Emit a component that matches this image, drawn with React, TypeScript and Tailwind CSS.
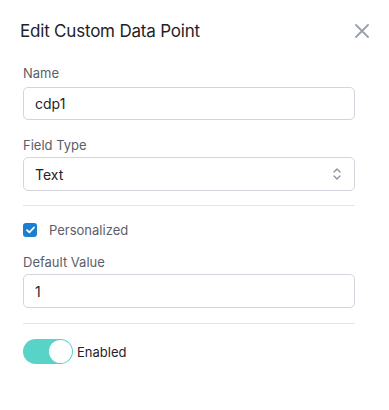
import React from "react";

export default function App() {
  return (
    <div className="w-[389px] h-[410px] bg-white" style={{ fontFamily: "Inter, 'Noto Sans', sans-serif" }}>
      <div className="flex items-start justify-between pl-[20px] pr-[20px] pt-[20px]">
        <h1 className="text-[17px] leading-[22px] text-[#1f2328] tracking-[-0.2px]">Edit Custom Data Point</h1>
        <button className="mt-[4px] text-[#9aa0ab]">
          <svg width="14" height="14" viewBox="0 0 14 14" fill="none" stroke="currentColor" strokeWidth="1.8" strokeLinecap="round">
            <path d="M1 1L13 13M13 1L1 13" />
          </svg>
        </button>
      </div>
      <div className="pl-[23px] pr-[34px] pt-[22px] flex flex-col">
        <label className="text-[13px] leading-[18px] text-[#5b6068]">Name</label>
        <div className="mt-[5px] h-[33px] rounded-[5px] border border-[#d3d5dc] flex items-center px-[11px] text-[14px] text-[#1f2328]">cdp1</div>
        <label className="mt-[16px] text-[13px] leading-[18px] text-[#5b6068]">Field Type</label>
        <div className="mt-[3px] h-[34px] rounded-[5px] border border-[#d3d5dc] flex items-center justify-between pl-[11px] pr-[12px] text-[14px] text-[#1f2328]">
          <span>Text</span>
          <svg width="10" height="14" viewBox="0 0 10 14" fill="none" stroke="#8a909a" strokeWidth="1.3" strokeLinecap="round" strokeLinejoin="round">
            <path d="M2 5L5 2L8 5M2 9L5 12L8 9" />
          </svg>
        </div>
        <div className="mt-[14px] h-px bg-[#e3e4e8]" />
        <div className="mt-[15px] flex items-center gap-[12px]">
          <div className="w-[14px] h-[14px] rounded-[3px] bg-[#1a7fd2] flex items-center justify-center">
            <svg width="9" height="8" viewBox="0 0 9 8" fill="none" stroke="white" strokeWidth="1.8" strokeLinecap="round" strokeLinejoin="round">
              <path d="M1 4.2L3.4 6.4L8 1.5" />
            </svg>
          </div>
          <span className="text-[13px] leading-[18px] text-[#5b6068]">Personalized</span>
        </div>
        <label className="mt-[14px] text-[13px] leading-[18px] text-[#5b6068]">Default Value</label>
        <div className="mt-[3px] h-[34px] rounded-[5px] border border-[#d3d5dc] flex items-center px-[11px] text-[14px] text-[#1f2328]">1</div>
        <div className="mt-[15px] h-px bg-[#e3e4e8]" />
        <div className="mt-[15px] flex items-center gap-[4px]">
          <div className="w-[50px] h-[25px] rounded-full bg-[#58d3c8] flex items-center justify-end pr-[1px]">
            <div className="w-[23px] h-[23px] rounded-full bg-white" />
          </div>
          <span className="text-[13px] leading-[18px] text-[#1f2328]">Enabled</span>
        </div>
      </div>
    </div>
  );
}
